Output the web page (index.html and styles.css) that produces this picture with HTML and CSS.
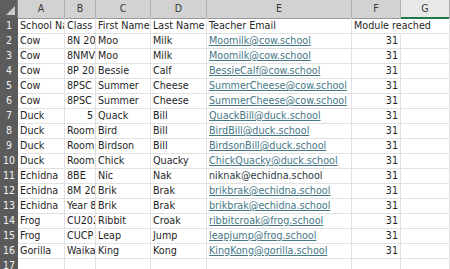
FILE: index.html
```html
<!DOCTYPE html>
<html>
<head>
<meta charset="utf-8">
<link rel="stylesheet" href="styles.css">
</head>
<body>
<div class="sheet">
  <div class="row head">
    <div class="corner"><svg width="18" height="18" viewBox="0 0 18 18"><polygon points="15,6 15,15 6,15" fill="#c9c9c9"/></svg></div>
    <div class="ch">A</div><div class="ch">B</div><div class="ch">C</div><div class="ch">D</div><div class="ch">E</div><div class="ch">F</div><div class="ch chg">G</div>
  </div>
  <div class="row"><div class="rh">1</div><div class="c">School Name</div><div class="c">Class</div><div class="c">First Name</div><div class="c">Last Name</div><div class="c">Teacher Email</div><div class="c span2">Module reached</div></div>
  <div class="row"><div class="rh">2</div><div class="c">Cow</div><div class="c">8N 2024</div><div class="c">Moo</div><div class="c">Milk</div><div class="c link">Moomilk@cow.school</div><div class="c num">31</div><div class="c"></div></div>
  <div class="row"><div class="rh">3</div><div class="c">Cow</div><div class="c">8NMV</div><div class="c">Moo</div><div class="c">Milk</div><div class="c link">Moomilk@cow.school</div><div class="c num">31</div><div class="c"></div></div>
  <div class="row"><div class="rh">4</div><div class="c">Cow</div><div class="c">8P 2024</div><div class="c">Bessie</div><div class="c">Calf</div><div class="c link">BessieCalf@cow.school</div><div class="c num">31</div><div class="c"></div></div>
  <div class="row"><div class="rh">5</div><div class="c">Cow</div><div class="c">8PSC</div><div class="c">Summer</div><div class="c">Cheese</div><div class="c link">SummerCheese@cow.school</div><div class="c num">31</div><div class="c"></div></div>
  <div class="row"><div class="rh">6</div><div class="c">Cow</div><div class="c">8PSC</div><div class="c">Summer</div><div class="c">Cheese</div><div class="c link">SummerCheese@cow.school</div><div class="c num">31</div><div class="c"></div></div>
  <div class="row"><div class="rh">7</div><div class="c">Duck</div><div class="c num">5</div><div class="c">Quack</div><div class="c">Bill</div><div class="c link">QuackBill@duck.school</div><div class="c num">31</div><div class="c"></div></div>
  <div class="row"><div class="rh">8</div><div class="c">Duck</div><div class="c">Room 4</div><div class="c">Bird</div><div class="c">Bill</div><div class="c link">BirdBill@duck.school</div><div class="c num">31</div><div class="c"></div></div>
  <div class="row"><div class="rh">9</div><div class="c">Duck</div><div class="c">Room 4</div><div class="c">Birdson</div><div class="c">Bill</div><div class="c link">BirdsonBill@duck.school</div><div class="c num">31</div><div class="c"></div></div>
  <div class="row"><div class="rh">10</div><div class="c">Duck</div><div class="c">Room 4</div><div class="c">Chick</div><div class="c">Quacky</div><div class="c link">ChickQuacky@duck.school</div><div class="c num">31</div><div class="c"></div></div>
  <div class="row"><div class="rh">11</div><div class="c">Echidna</div><div class="c">8BE</div><div class="c">Nic</div><div class="c">Nak</div><div class="c plain">niknak@echidna.school</div><div class="c num">31</div><div class="c"></div></div>
  <div class="row"><div class="rh">12</div><div class="c">Echidna</div><div class="c">8M 2024</div><div class="c">Brik</div><div class="c">Brak</div><div class="c link">brikbrak@echidna.school</div><div class="c num">31</div><div class="c"></div></div>
  <div class="row"><div class="rh">13</div><div class="c">Echidna</div><div class="c">Year 8 2024</div><div class="c">Brik</div><div class="c">Brak</div><div class="c link">brikbrak@echidna.school</div><div class="c num">31</div><div class="c"></div></div>
  <div class="row"><div class="rh">14</div><div class="c">Frog</div><div class="c">CU2024</div><div class="c">Ribbit</div><div class="c">Croak</div><div class="c link">ribbitcroak@frog.school</div><div class="c num">31</div><div class="c"></div></div>
  <div class="row"><div class="rh">15</div><div class="c">Frog</div><div class="c">CUCP</div><div class="c">Leap</div><div class="c">Jump</div><div class="c link">leapjump@frog.school</div><div class="c num">31</div><div class="c"></div></div>
  <div class="row"><div class="rh">16</div><div class="c">Gorilla</div><div class="c">Waikato</div><div class="c">King</div><div class="c">Kong</div><div class="c link">KingKong@gorilla.school</div><div class="c num">31</div><div class="c"></div></div>
  <div class="row"><div class="rh">17</div><div class="c"></div><div class="c"></div><div class="c"></div><div class="c"></div><div class="c"></div><div class="c"></div><div class="c"></div></div>
</div>
</body>
</html>
```
FILE: styles.css
```css
html, body {
  margin: 0;
  padding: 0;
  background: #ffffff;
  overflow: hidden;
}
.sheet {
  width: 450px;
  font-family: "DejaVu Sans Condensed", "Liberation Sans", Arial, sans-serif;
  font-size: 10.7px;
  color: #1f1f1f;
}
.row {
  display: grid;
  grid-template-columns: 18px 47px 31px 55px 56px 145px 49px 1fr;
  height: 15px;
}
.row.head {
  height: 18px;
}
.corner {
  background: #5f5f5f;
  border-right: 1px solid #7a7a7a;
  border-bottom: 1px solid #7a7a7a;
  box-sizing: border-box;
}
.corner svg {
  display: block;
}
.ch {
  background: #d2d2d2;
  color: #3a3a3a;
  text-align: center;
  font-size: 10.5px;
  line-height: 17px;
  border-right: 1px solid #b0b0b0;
  border-bottom: 1px solid #9a9a9a;
}
.ch.chg {
  background: #e8e8e8;
  border-bottom: 2px solid #1f7a47;
  line-height: 16px;
}
.rh {
  background: #5b5b5b;
  color: #f2f2f2;
  text-align: center;
  font-size: 10.5px;
  line-height: 15px;
  border-bottom: 1px solid #777777;
  box-sizing: border-box;
}
.c {
  border-right: 1px solid #e1e1e1;
  border-bottom: 1px solid #e1e1e1;
  box-sizing: border-box;
  padding: 0 2px;
  line-height: 15px;
  white-space: nowrap;
  overflow: hidden;
}
.c.span2 {
  grid-column: span 2;
}
.c.num {
  text-align: right;
}
.c.link {
  color: #467886;
  text-decoration: underline;
}
.c.plain {
  color: #2b3a40;
}
```
